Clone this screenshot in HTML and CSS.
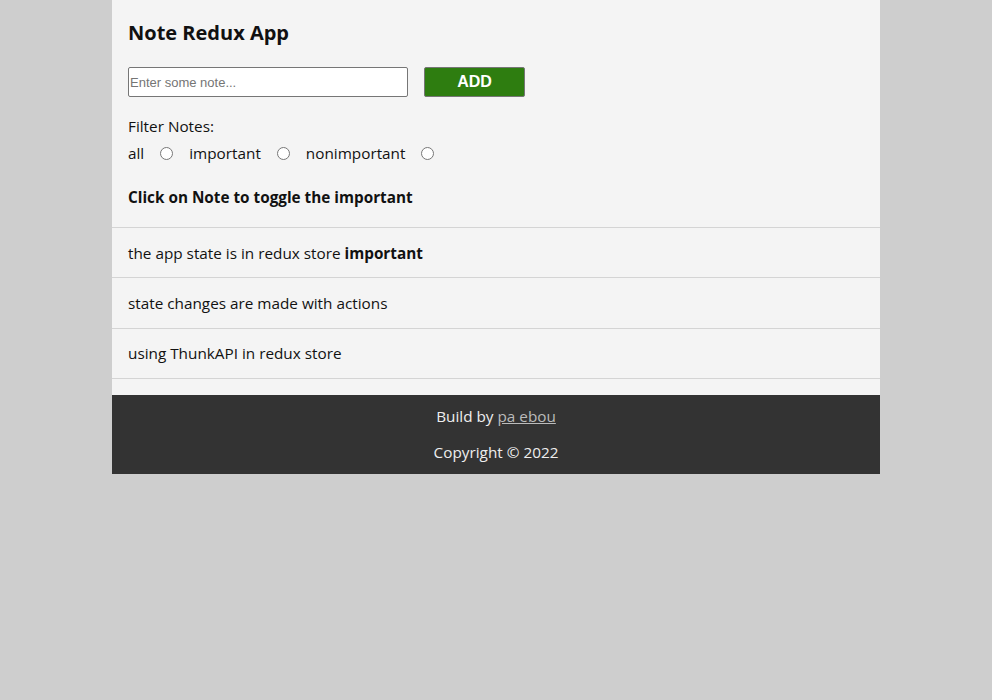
FILE: index.html
```html
<!DOCTYPE html>
<html>
<head>
<meta charset="utf-8">
<link rel="stylesheet" href="styles.css">
</head>
<body>
<div class="app">
  <header class="top">
    <h1 class="title">Note Redux App</h1>
    <form class="note-form">
      <input class="note-input" type="text" placeholder="Enter some note...">
      <button class="add-btn" type="button">ADD</button>
    </form>
    <div class="filter">
      <div class="filter-label">Filter Notes:</div>
      <div class="filter-row">
        <span>all</span><input class="radio" type="radio" name="f">
        <span>important</span><input class="radio" type="radio" name="f">
        <span>nonimportant</span><input class="radio" type="radio" name="f">
      </div>
    </div>
    <p class="hint">Click on Note to toggle the important</p>
  </header>
  <ul class="notes">
    <li class="note"><span>the app state is in redux store <strong>important</strong></span></li>
    <li class="note"><span>state changes are made with actions</span></li>
    <li class="note"><span>using ThunkAPI in redux store</span></li>
  </ul>
  <footer class="footer">
    <div class="footer-line">Build by <a class="footer-link" href="#">pa ebou</a></div>
    <div class="footer-line">Copyright © 2022</div>
  </footer>
</div>
</body>
</html>
```
FILE: styles.css
```css
html, body {
  margin: 0;
  padding: 0;
  background: #cecece;
}
body {
  font-family: "Open Sans", "Noto Sans", sans-serif;
  color: #111;
  font-size: 15.3px;
}
.app {
  width: 768px;
  margin: 0 auto;
  background: #f4f4f4;
}
.top {
  padding: 16px 16px 0;
}
.title {
  margin: 0;
  font-size: 20px;
  line-height: 34px;
  font-weight: 700;
}
.note-form {
  display: flex;
  align-items: center;
  gap: 16px;
  margin-top: 17px;
}
.note-input {
  box-sizing: border-box;
  width: 280px;
  height: 30px;
  margin: 0;
  padding: 1px 1px;
  border: 1px solid #767676;
  border-radius: 2px;
  background: #fff;
  font-family: "Liberation Sans", Arial, sans-serif;
  font-size: 13px;
}
.note-input::placeholder {
  color: #757575;
}
.add-btn {
  box-sizing: border-box;
  width: 101px;
  height: 30px;
  margin: 0;
  border: 1px solid #767676;
  border-radius: 2px;
  background: #2e7d10;
  color: #fff;
  font-family: "Liberation Sans", Arial, sans-serif;
  font-weight: 700;
  font-size: 16px;
  padding: 0;
}
.filter {
  margin-top: 17px;
}
.filter-label {
  line-height: 24px;
}
.filter-row {
  display: flex;
  align-items: center;
  line-height: 24px;
  margin-top: 3px;
}
.radio {
  width: 13px;
  height: 13px;
  margin: 0 16px;
}
.hint {
  margin: 20px 0 0;
  line-height: 24px;
  font-weight: 700;
  padding-bottom: 18px;
}
.notes {
  list-style: none;
  margin: 0;
  padding: 0 0 16px;
  border-top: 1px solid #d4d4d4;
}
.note {
  box-sizing: border-box;
  height: 50.33px;
  display: flex;
  align-items: center;
  padding: 0 16px;
  border-bottom: 1px solid #d4d4d4;
}
.footer {
  background: #333;
  color: #eee;
  text-align: center;
  padding: 9px 0 10px;
}
.footer-line {
  line-height: 24px;
}
.footer-line + .footer-line {
  margin-top: 12px;
}
.footer-link {
  color: #bbb;
}
```
